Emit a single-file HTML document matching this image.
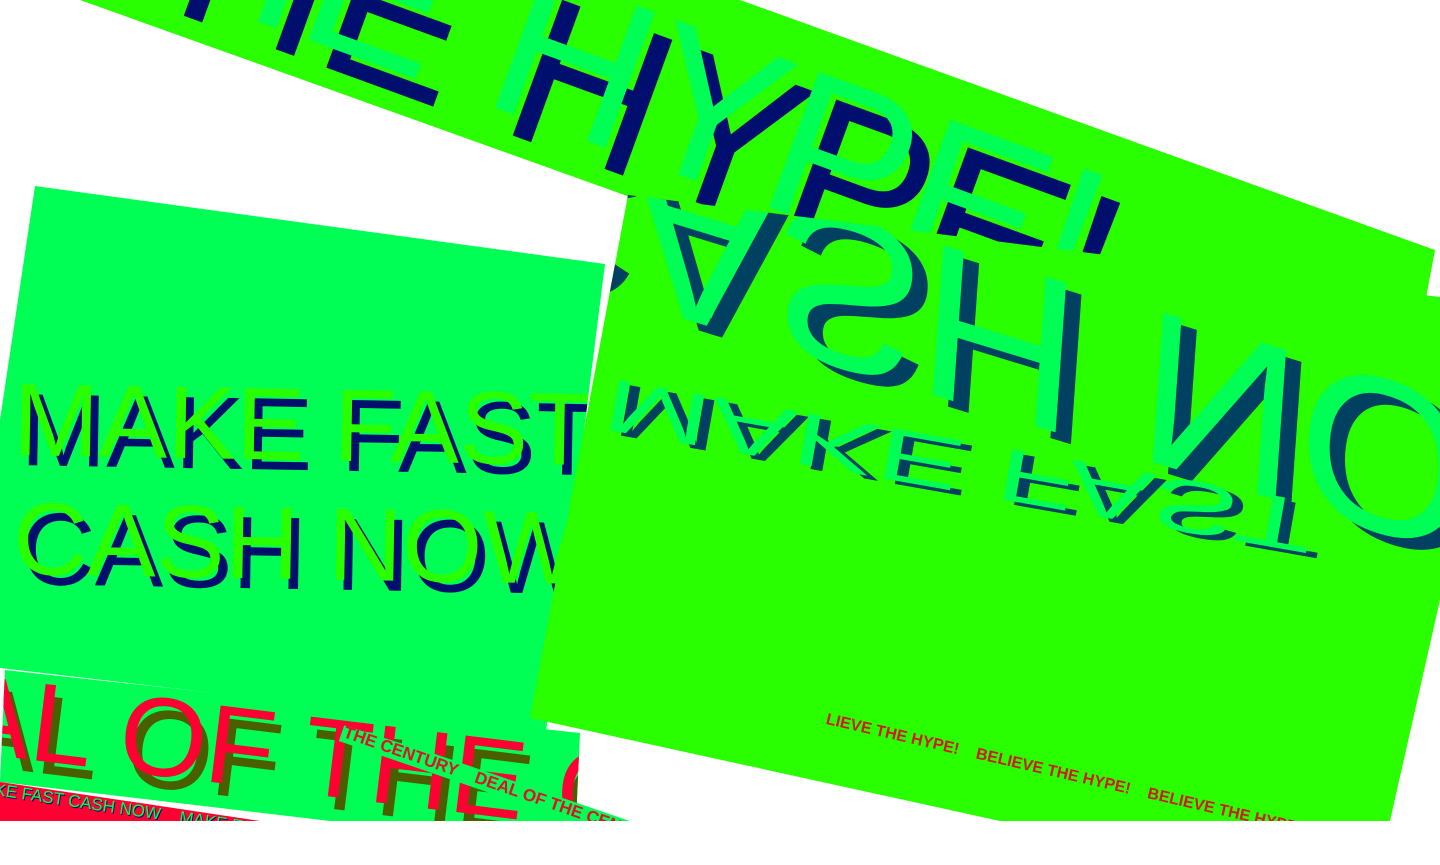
<!DOCTYPE html>
<html><head><meta charset="utf-8"><style>
html,body{margin:0;padding:0;width:1440px;height:821px;overflow:hidden;background:#fff;font-family:"Liberation Sans",sans-serif;}
.layer{position:absolute;left:0;top:0;width:1440px;height:821px;}
.t{position:absolute;white-space:nowrap;line-height:1;transform-origin:0 0;}
</style></head><body>

<!-- top band -->
<div class="layer" style="background:#2aff00;clip-path:polygon(80px 0,740px 0,1435px 250px,1420px 330px,700px 222px)">
  <div class="t" style="left:90px;top:-228px;font-size:210px;color:#00ff55;transform:rotate(20deg);text-shadow:26px 20px 0 #000f6e;">THE HYPE!</div>
</div>

<!-- left panel -->
<div class="layer" style="background:#00ff55;clip-path:polygon(35px 186px,605px 264px,546px 732px,0 668px,0 420px)">
  <div class="t" style="left:14px;top:368px;font-size:103px;color:#2aff00;text-shadow:8px 10px 0 #000f6e;transform:rotate(1deg)">MAKE FAST</div>
  <div class="t" style="left:14px;top:487px;font-size:103px;color:#2aff00;text-shadow:8px 10px 0 #000f6e;transform:rotate(1deg)">CASH NOW</div>
</div>

<!-- right panel -->
<div class="layer" style="background:#2aff00;clip-path:polygon(628px 195px,1440px 297px,1440px 600px,1390px 821px,1000px 821px,530px 718px)">
  <div class="t" style="left:460px;top:285px;font-size:250px;color:#00ff55;text-shadow:18px -8px 0 #004060;transform:rotate(17deg) scaleY(-0.85) scaleX(0.92) skewX(-12deg);">CASH NOW</div>
  <div class="t" style="left:598px;top:440px;font-size:135px;color:#00ff55;text-shadow:12px -6px 0 #004060;transform:rotate(10deg) scaleY(-0.55) scaleX(0.95);">MAKE FAST</div>
  <div class="t" style="left:828px;top:712px;font-size:16px;font-weight:bold;color:#d01a1a;transform:rotate(13deg);">LIEVE THE HYPE! &nbsp;&nbsp; BELIEVE THE HYPE! &nbsp;&nbsp; BELIEVE THE HYPE!</div>
</div>

<!-- bottom strip -->
<div class="layer" style="background:#00ff55;clip-path:polygon(5px 670px,580px 733px,576px 821px,330px 821px,0 782px)">
  <div class="t" style="left:-190px;top:638px;font-size:112px;color:#ff0033;text-shadow:8px 12px 0 #4a6000;transform:rotate(7deg)">DEAL OF THE C</div>
</div>

<!-- red strip -->
<div class="layer" style="background:#ff0033;clip-path:polygon(0 782px,260px 821px,0 821px)">
  <div class="t" style="left:-4px;top:781px;font-size:17px;color:#00ff55;text-shadow:1px 1px 0 #000f6e;transform:rotate(8.5deg)">KE FAST CASH NOW &nbsp;&nbsp; MAKE FAST CASH NOW</div>
</div>

<!-- century strip -->
<div class="layer" style="clip-path:polygon(330px 721px,650px 821px,560px 821px,330px 750px)">
  <div class="t" style="left:345px;top:723px;font-size:17px;font-weight:bold;color:#e0102a;background:#00ff55;padding:0 40px 2px 2px;transform:rotate(19deg)">THE CENTURY &nbsp;&nbsp; DEAL OF THE CENTURY</div>
</div>

</body></html>
